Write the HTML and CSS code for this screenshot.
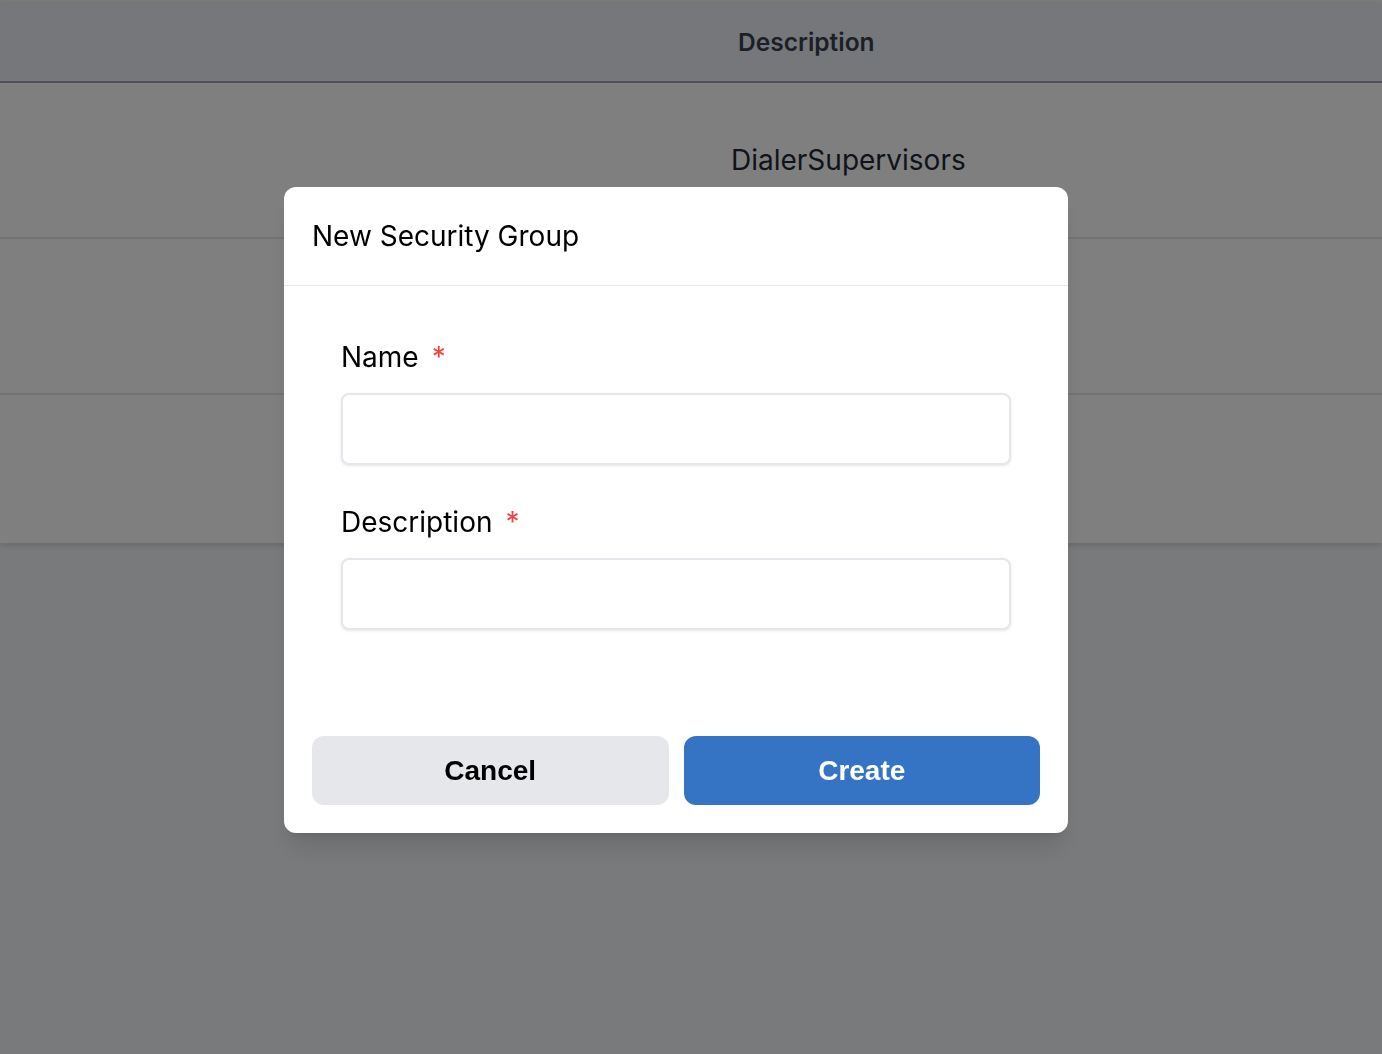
FILE: index.html
```html
<!DOCTYPE html>
<html lang="en">
<head>
    <meta charset="UTF-8">
    <meta name="viewport" content="width=device-width, initial-scale=1.0">
    <title>Security Groups</title>
    <link rel="stylesheet" href="styles.css">
</head>
<body>
    <div class="topbar"></div>
    <div class="table">
        <div class="table-head">
            <div class="cell"></div>
            <div class="cell head-cell">Description</div>
        </div>
        <div class="table-row">
            <div class="cell"></div>
            <div class="cell row-cell">DialerSupervisors</div>
        </div>
        <div class="table-row">
            <div class="cell"></div>
            <div class="cell row-cell"></div>
        </div>
        <div class="table-row">
            <div class="cell"></div>
            <div class="cell row-cell"></div>
        </div>
    </div>

    <div class="overlay">
        <div class="modal">
            <div class="modal-header">
                <h2 class="modal-title">New Security Group</h2>
            </div>
            <form class="modal-body">
                <div class="field">
                    <label class="field-label" for="name">Name<span class="required">*</span></label>
                    <input class="field-input" id="name" type="text">
                </div>
                <div class="field">
                    <label class="field-label" for="description">Description<span class="required">*</span></label>
                    <input class="field-input" id="description" type="text">
                </div>
            </form>
            <div class="modal-footer">
                <button class="btn btn-cancel" type="button">Cancel</button>
                <button class="btn btn-create" type="button">Create</button>
            </div>
        </div>
    </div>
</body>
</html>
```

FILE: styles.css
```css
:root {
    --gray-100: #f3f4f6;
    --gray-200: #e5e7eb;
    --gray-400: #9ca3af;
    --gray-700: #374151;
    --red-500: #ef4444;
    --blue-primary: #3574c4;
}

body {
    margin: 0;
    padding: 0;
    background-color: var(--gray-100);
    min-height: 100vh;
    font-family: Inter, "Noto Sans", sans-serif;
    color: #000;
}

.topbar {
    height: 3px;
    background: #f6f6f6;
}

.table {
    background: white;
    box-shadow: 0 2px 6px rgba(0, 0, 0, 0.15);
}

.table-head,
.table-row {
    display: grid;
    grid-template-columns: 706px 1fr;
}

.table-head {
    height: 78px;
    background: #edeff4;
    border-bottom: 2px solid var(--gray-400);
}

.table-row {
    height: 154px;
    border-bottom: 2px solid var(--gray-200);
}

.table-row:last-child {
    height: 148px;
    border-bottom: none;
}

.cell {
    display: flex;
    align-items: center;
}

.head-cell {
    padding-left: 32px;
    font-size: 24.5px;
    font-weight: 600;
    color: var(--gray-700);
}

.row-cell {
    padding-left: 25px;
    font-size: 28px;
    color: #1f2937;
}

.overlay {
    position: fixed;
    inset: 0;
    display: flex;
    justify-content: center;
    align-items: center;
    padding: 0 30px 34px 0;
    background: rgba(0, 0, 0, 0.5);
}

.modal {
    width: 784px;
    background: white;
    border-radius: 12px;
    box-shadow: 0 20px 25px -5px rgba(0, 0, 0, 0.1), 0 8px 10px -6px rgba(0, 0, 0, 0.1);
}

.modal-header {
    display: flex;
    align-items: center;
    height: 98px;
    padding: 0 28px;
    border-bottom: 1px solid var(--gray-200);
}

.modal-title {
    margin: 0;
    font-size: 28px;
    font-weight: 400;
}

.modal-body {
    display: flex;
    flex-direction: column;
    gap: 39px;
    padding: 53px 57px 106px;
}

.field {
    display: flex;
    flex-direction: column;
    gap: 18px;
}

.field-label {
    font-size: 28px;
    line-height: 36px;
}

.required {
    margin-left: 13px;
    color: var(--red-500);
}

.field-input {
    box-sizing: border-box;
    height: 72px;
    margin: 0;
    padding: 0 16px;
    border: 2px solid #e6e6ec;
    border-radius: 8px;
    box-shadow: 0 1px 3px rgba(0, 0, 0, 0.1);
    font-family: inherit;
    font-size: 24px;
    outline: none;
}

.modal-footer {
    display: flex;
    gap: 15px;
    padding: 0 28px 28px;
}

.btn {
    flex: 1 0 0;
    height: 69px;
    border: none;
    border-radius: 12px;
    font-family: "Liberation Sans", Arial, sans-serif;
    font-size: 28px;
    font-weight: 700;
    cursor: pointer;
}

.btn-cancel {
    background: var(--gray-200);
    color: #000;
}

.btn-create {
    background: var(--blue-primary);
    color: white;
}
```
